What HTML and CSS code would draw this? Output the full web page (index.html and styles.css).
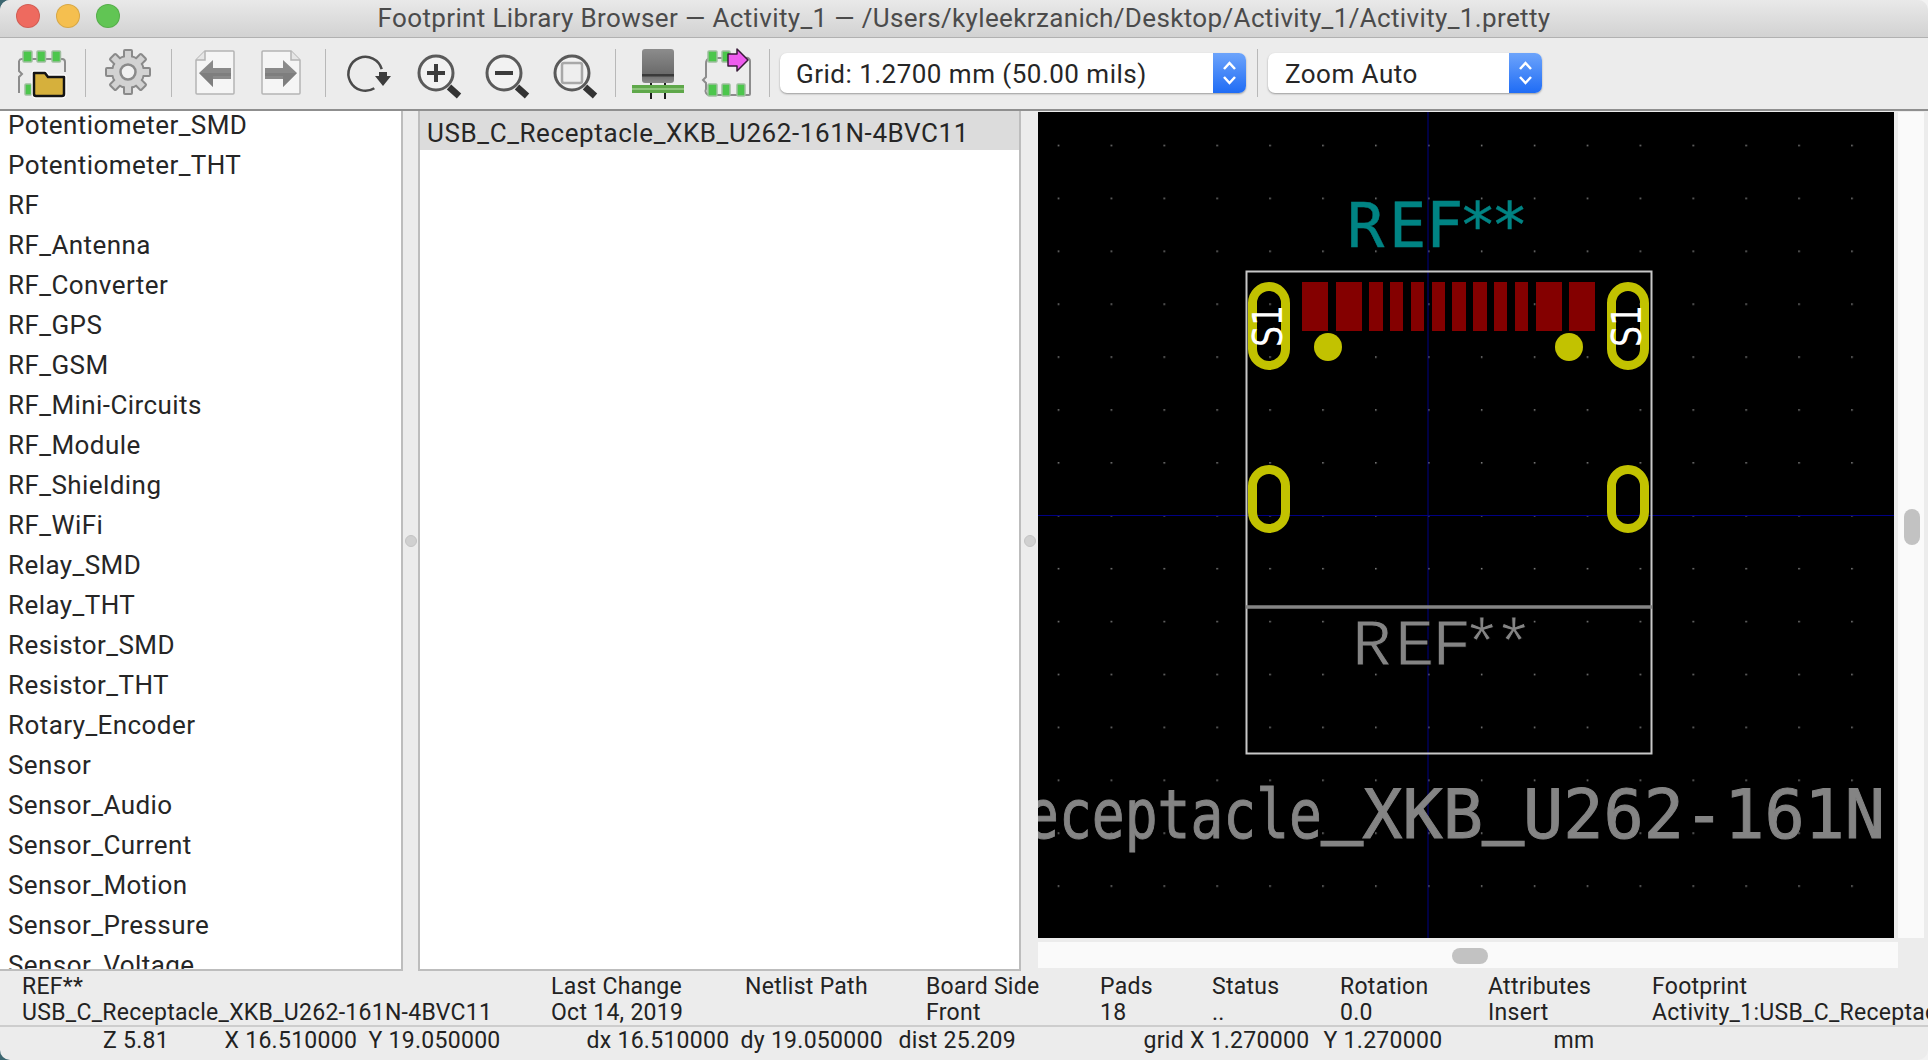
FILE: index.html
```html
<!DOCTYPE html>
<html lang="en">
<head>
<meta charset="utf-8">
<title>Footprint Library Browser</title>
<link rel="stylesheet" href="styles.css">
</head>
<body>
<div class="window">
  <header class="titlebar">
    <div class="lights"><span class="light red"></span><span class="light yellow"></span><span class="light green"></span></div>
    <div class="title">Footprint Library Browser — Activity_1 — /Users/kyleekrzanich/Desktop/Activity_1/Activity_1.pretty</div>
  </header>

  <div class="toolbar">
    <svg class="icon" viewBox="0 0 48 48">
      <path d="M1 12a3 3 0 0 1 3-2h40a3 3 0 0 1 3 3v10M1 12v10l3 3-3 3v16" fill="none" stroke="#8c8c8c" stroke-width="2"/>
      <g fill="#4cc64c" stroke="#9fbf9f" stroke-width="1.5"><rect x="5" y="2" width="9" height="11" rx="1"/><rect x="19" y="2" width="8.500" height="11" rx="1"/><rect x="34" y="2" width="8.500" height="11" rx="1"/><rect x="7" y="35" width="6.500" height="11" rx="1"/></g>
      <path d="M16 45V24h11l3 4h16v17a2 2 0 0 1-2 2H18a2 2 0 0 1-2-2z" fill="#d6b03c" stroke="#fff" stroke-width="5" stroke-linejoin="round"/>
      <path d="M16 45V24h11l3 4h16v17a2 2 0 0 1-2 2H18a2 2 0 0 1-2-2z" fill="#d6b03c" stroke="#141414" stroke-width="2.500" stroke-linejoin="round"/>
    </svg>
    <span class="sep"></span>
    <svg class="icon" viewBox="0 0 48 48">
      <circle cx="24" cy="23" r="16" fill="#d2d2d2" stroke="#8a8a8a" stroke-width="2"/>
      <g fill="#d2d2d2" stroke="#8a8a8a" stroke-width="2">
        <rect x="20" y="1" width="8" height="10" rx="1"/>
        <rect x="20" y="1" width="8" height="10" rx="1" transform="rotate(45 24 23)"/>
        <rect x="20" y="1" width="8" height="10" rx="1" transform="rotate(90 24 23)"/>
        <rect x="20" y="1" width="8" height="10" rx="1" transform="rotate(135 24 23)"/>
        <rect x="20" y="1" width="8" height="10" rx="1" transform="rotate(180 24 23)"/>
        <rect x="20" y="1" width="8" height="10" rx="1" transform="rotate(225 24 23)"/>
        <rect x="20" y="1" width="8" height="10" rx="1" transform="rotate(270 24 23)"/>
        <rect x="20" y="1" width="8" height="10" rx="1" transform="rotate(315 24 23)"/>
      </g>
      <circle cx="24" cy="23" r="15" fill="#d2d2d2"/>
      <circle cx="24" cy="23" r="7.500" fill="#f0f0f0" stroke="#8a8a8a" stroke-width="2.500"/>
    </svg>
    <span class="sep"></span>
    <div class="group">
      <svg class="icon" viewBox="0 0 48 48">
        <path d="M15 2h28a1 1 0 0 1 1 1v41a1 1 0 0 1-1 1H7a1 1 0 0 1-1-1V11z" fill="#f5f5f5" stroke="#b4b4b4" stroke-width="1.500"/>
        <path d="M6 11h9V2" fill="#e6e6e6" stroke="#b4b4b4" stroke-width="1.500"/>
        <path d="M9 24l14-13v8h18v11H23v8z" fill="#8a8a8a"/>
        <path d="M9 24h32v3H23v11z" fill="#6f6f6f" opacity=".45"/>
      </svg>
      <svg class="icon" viewBox="0 0 48 48">
        <path d="M33 2H5a1 1 0 0 0-1 1v41a1 1 0 0 0 1 1h36a1 1 0 0 0 1-1V11z" fill="#f5f5f5" stroke="#b4b4b4" stroke-width="1.500"/>
        <path d="M42 11h-9V2" fill="#e6e6e6" stroke="#b4b4b4" stroke-width="1.500"/>
        <path d="M39 24L25 11v8H7v11h18v8z" fill="#8a8a8a"/>
        <path d="M39 24H7v3h18v11z" fill="#6f6f6f" opacity=".45"/>
      </svg>
    </div>
    <span class="sep"></span>
    <div class="group">
      <svg class="icon" viewBox="0 0 48 48">
        <path d="M38 22A17 17 0 1 0 28 40" fill="none" stroke="#4a4a4a" stroke-width="2.500" transform="rotate(-8 24 23)"/>
        <path d="M35 23h8v4h4l-8 10-8-10h4z" fill="#3c3c3c"/>
      </svg>
      <svg class="icon" viewBox="0 0 48 48">
        <circle cx="24" cy="24" r="17" fill="#f2f2f2" stroke="#5a5a5a" stroke-width="3"/>
        <path d="M24 15v18M15 24h18" stroke="#3c3c3c" stroke-width="4"/>
        <path d="M37 38l10 9" stroke="#333" stroke-width="6.500"/>
      </svg>
      <svg class="icon" viewBox="0 0 48 48">
        <circle cx="24" cy="24" r="17" fill="#f2f2f2" stroke="#5a5a5a" stroke-width="3"/>
        <path d="M15 24h18" stroke="#3c3c3c" stroke-width="4"/>
        <path d="M37 38l10 9" stroke="#333" stroke-width="6.500"/>
      </svg>
      <svg class="icon" viewBox="0 0 48 48">
        <circle cx="24" cy="24" r="17" fill="#f2f2f2" stroke="#5a5a5a" stroke-width="3"/>
        <rect x="14" y="14" width="20" height="20" rx="2" fill="#eeeeee" stroke="#a8a8a8" stroke-width="2.500"/>
        <path d="M37 38l10 9" stroke="#333" stroke-width="6.500"/>
      </svg>
    </div>
    <span class="sep"></span>
    <div class="group">
      <svg class="icon" viewBox="0 0 48 48">
        <defs><linearGradient id="cap" x1="0" y1="0" x2="0" y2="1"><stop offset="0" stop-color="#8c8c8c"/><stop offset=".75" stop-color="#6a6a6a"/><stop offset="1" stop-color="#8a8a8a"/></linearGradient></defs>
        <path d="M17 32v18M31 32v18" stroke="#1e1e1e" stroke-width="2"/>
        <rect x="8" y="0" width="32" height="34" rx="3" fill="url(#cap)"/>
        <rect x="8" y="25" width="32" height="2.500" fill="#3a3a3a"/>
        <rect x="-2" y="36" width="52" height="8" fill="#5fa84a"/>
        <rect x="-2" y="39" width="52" height="2" fill="#8cc47a"/>
      </svg>
      <svg class="icon" viewBox="0 0 48 48">
        <path d="M4 15a6 6 0 0 1 4-6h36a3 3 0 0 1 4 3v33a1 1 0 0 1-1 1H8a4 4 0 0 1-4-6v-6l-3-3 3-3z" fill="none" stroke="#8c8c8c" stroke-width="2"/>
        <g fill="#4cc64c" stroke="#9fbf9f" stroke-width="1.500"><rect x="6" y="2" width="9" height="11" rx="1"/><rect x="20" y="2" width="8" height="11" rx="1"/><rect x="6" y="35" width="9" height="12" rx="1"/><rect x="20" y="35" width="8" height="12" rx="1"/><rect x="35" y="35" width="8" height="12" rx="1"/></g>
        <path d="M26 5h9V0l11 11-11 11v-5h-9z" fill="#ee5cee" stroke="#3a1a3a" stroke-width="1.500" stroke-linejoin="round"/>
      </svg>
    </div>
    <span class="sep"></span>
    <div class="combo combo-grid">
      <span class="combo-text">Grid: 1.2700 mm (50.00 mils)</span>
      <span class="stepper"><svg viewBox="0 0 33 40"><path d="M11 16l5.500-6 5.500 6M11 24l5.500 6 5.500-6" fill="none" stroke="#fff" stroke-width="2.500"/></svg></span>
    </div>
    <span class="sep"></span>
    <div class="combo combo-zoom">
      <span class="combo-text">Zoom Auto</span>
      <span class="stepper"><svg viewBox="0 0 33 40"><path d="M11 16l5.500-6 5.500 6M11 24l5.500 6 5.500-6" fill="none" stroke="#fff" stroke-width="2.500"/></svg></span>
    </div>
  </div>

  <main class="main">
    <div class="list list-libs">
      <ul class="rows">
        <li>Potentiometer_SMD</li><li>Potentiometer_THT</li><li>RF</li><li>RF_Antenna</li><li>RF_Converter</li><li>RF_GPS</li><li>RF_GSM</li><li>RF_Mini-Circuits</li><li>RF_Module</li><li>RF_Shielding</li><li>RF_WiFi</li><li>Relay_SMD</li><li>Relay_THT</li><li>Resistor_SMD</li><li>Resistor_THT</li><li>Rotary_Encoder</li><li>Sensor</li><li>Sensor_Audio</li><li>Sensor_Current</li><li>Sensor_Motion</li><li>Sensor_Pressure</li><li>Sensor_Voltage</li>
      </ul>
    </div>
    <div class="sash"><span class="sash-dot"></span></div>
    <div class="list list-fps">
      <div class="selected">USB_C_Receptacle_XKB_U262-161N-4BVC11</div>
    </div>
    <div class="sash"><span class="sash-dot"></span></div>
    <div class="canvas-area">
      <svg class="canvas" viewBox="1038 112 856 826">
        <defs>
          <pattern id="grid" x="1428" y="515" width="52.9" height="52.9" patternUnits="userSpaceOnUse"><rect x="0" y="0" width="1.500" height="1.500" fill="#8a8a8a"/></pattern>
          <clipPath id="clip"><rect x="1038" y="112" width="856" height="826"/></clipPath>
        </defs>
        <rect x="1038" y="112" width="856" height="826" fill="#000"/>
        <rect x="1038" y="112" width="856" height="826" fill="url(#grid)"/>
        <path d="M1428 112v826M1038 515.500h856" stroke="#000084" stroke-width="1"/>
        <rect x="1246.500" y="271.500" width="405" height="482" fill="none" stroke="#c8c8c8" stroke-width="2"/>
        <path d="M1246 607h406" stroke="#848484" stroke-width="3.500"/>
        <g fill="#840000">
          <rect x="1302" y="282" width="26" height="49"/><rect x="1336" y="282" width="26" height="49"/><rect x="1369" y="282" width="14" height="49"/><rect x="1390" y="282" width="13" height="49"/><rect x="1411" y="282" width="13" height="49"/><rect x="1432" y="282" width="13" height="49"/><rect x="1452" y="282" width="14" height="49"/><rect x="1473" y="282" width="14" height="49"/><rect x="1494" y="282" width="13" height="49"/><rect x="1515" y="282" width="13" height="49"/><rect x="1536" y="282" width="26" height="49"/><rect x="1569" y="282" width="26" height="49"/>
        </g>
        <g fill="#c2c200"><circle cx="1328" cy="347" r="14"/><circle cx="1569" cy="347" r="14"/></g>
        <g fill="none" stroke="#c2c200" stroke-width="9">
          <rect x="1252.500" y="286.500" width="33" height="79" rx="16.500"/>
          <rect x="1611.500" y="286.500" width="33" height="79" rx="16.500"/>
          <rect x="1252.500" y="469.500" width="33" height="59" rx="16.500"/>
          <rect x="1611.500" y="469.500" width="33" height="59" rx="16.500"/>
        </g>
        <text class="pad-name" transform="translate(1282 347) rotate(-90)" textLength="42" lengthAdjust="spacingAndGlyphs">S1</text>
        <text class="pad-name" transform="translate(1641 347) rotate(-90)" textLength="42" lengthAdjust="spacingAndGlyphs">S1</text>
        <text class="ref-top" x="1347 1389 1426 1459 1491" y="247">REF**</text>
        <text class="ref-fab" x="1352 1395 1432 1462 1494" y="665">REF**</text>
        <g clip-path="url(#clip)">
          <text class="value" x="1026" y="838" textLength="296" lengthAdjust="spacingAndGlyphs">eceptacle</text>
          <text class="value" x="1322" y="838"><tspan class="under" dy="-9">_</tspan><tspan dy="9">XKB</tspan><tspan class="under" dy="-9">_</tspan><tspan dy="9">U262-161N</tspan></text>
        </g>
      </svg>
      <div class="gutter"></div>
      <div class="vscroll"><span class="vthumb"></span></div>
      <div class="hscroll"><span class="hthumb"></span></div>
    </div>
  </main>

  <section class="msgpanel">
    <div class="col c1"><div>REF**</div><div>USB_C_Receptacle_XKB_U262-161N-4BVC11</div></div>
    <div class="col c2"><div>Last Change</div><div>Oct 14, 2019</div></div>
    <div class="col c3"><div>Netlist Path</div><div></div></div>
    <div class="col c4"><div>Board Side</div><div>Front</div></div>
    <div class="col c5"><div>Pads</div><div>18</div></div>
    <div class="col c6"><div>Status</div><div>..</div></div>
    <div class="col c7"><div>Rotation</div><div>0.0</div></div>
    <div class="col c8"><div>Attributes</div><div>Insert</div></div>
    <div class="col c9"><div>Footprint</div><div>Activity_1:USB_C_Receptacle_XKB_U262-161N-4BVC11</div></div>
  </section>

  <footer class="statusbar">
    <span>Z 5.81</span><span>X 16.510000</span><span>Y 19.050000</span><span>dx 16.510000</span><span>dy 19.050000</span><span>dist 25.209</span><span>grid X 1.270000</span><span>Y 1.270000</span><span>mm</span>
  </footer>
</div>
</body>
</html>
```
FILE: styles.css
```css
* { box-sizing: border-box; }
html, body { margin: 0; height: 100%; }
body {
  width: 1928px;
  height: 1060px;
  overflow: hidden;
  background: linear-gradient(to right, #3c6670 50%, #f2f2f2 50%);
  font-family: Roboto, "Liberation Sans", sans-serif;
  color: #222;
}
.window {
  width: 1928px;
  height: 1060px;
  background: #ececec;
  border-radius: 10px;
  overflow: hidden;
  display: flex;
  flex-direction: column;
}
.titlebar {
  height: 38px;
  flex: none;
  display: flex;
  align-items: center;
  position: relative;
  background: linear-gradient(#e9e9e9, #d2d2d2);
  border-bottom: 1px solid #b1b1b1;
}
.lights {
  position: absolute;
  left: 16px;
  top: 4px;
  display: flex;
  gap: 16px;
}
.light { width: 24px; height: 24px; border-radius: 50%; border: 1px solid rgba(0, 0, 0, .12); }
.red { background: #ee6a5f; }
.yellow { background: #f5bf4f; }
.green { background: #61c554; }
.title {
  flex: 1;
  text-align: center;
  font-size: 26px;
  letter-spacing: .36px;
  line-height: 34px;
  margin-bottom: 2px;
  color: #4b4b4b;
  white-space: nowrap;
}
.toolbar {
  height: 73px;
  flex: none;
  display: flex;
  align-items: center;
  padding: 1px 0 2px 18px;
  background: #ececec;
  border-bottom: 2px solid #8f8f8f;
}
.icon {
  width: 48px;
  height: 48px;
  flex: none;
  overflow: visible;
  filter: blur(.6px);
}
.sep {
  width: 1px;
  height: 48px;
  flex: none;
  margin: 0 18px 0 19px;
  background: #b8b8b8;
}
.group { display: flex; gap: 20px; flex: none; }
.combo {
  height: 40px;
  flex: none;
  display: flex;
  align-items: center;
  justify-content: space-between;
  margin: 0 -8px;
  padding-left: 16px;
  background: #fff;
  border-radius: 7px;
  box-shadow: 0 1px 2px rgba(0, 0, 0, .35);
  font-size: 26px;
  letter-spacing: .48px;
  color: #262626;
  overflow: hidden;
}
.combo-text { padding-top: 2px; }
.combo-grid { width: 466px; }
.combo-zoom { width: 274px; padding-left: 17px; }
.stepper {
  width: 33px;
  height: 40px;
  flex: none;
  background: linear-gradient(#6da4fb, #1f6cf5);
}
.stepper svg { display: block; width: 33px; height: 40px; }
.main {
  height: 861px;
  flex: none;
  display: flex;
}
.list {
  background: #fff;
  height: 860px;
  overflow: hidden;
  flex: none;
  font-size: 26px;
  letter-spacing: .43px;
  color: #262626;
  border-bottom: 2px solid #bdbdbd;
}
.list-libs { width: 403px; border-right: 2px solid #bdbdbd; }
.list-fps { width: 603px; border-left: 2px solid #bdbdbd; border-right: 2px solid #bdbdbd; letter-spacing: .6px; }
.rows {
  list-style: none;
  margin: -6px 0 0;
  padding: 0 0 0 8px;
}
.rows li { height: 40px; line-height: 40px; white-space: nowrap; }
.selected {
  height: 39px;
  line-height: 44px;
  padding-left: 7px;
  background: #dcdcdc;
  white-space: nowrap;
}
.sash {
  flex: none;
  width: 15px;
  display: flex;
  align-items: center;
  justify-content: center;
}
.sash:nth-of-type(4) { width: 17px; }
.sash-dot {
  width: 12px;
  height: 12px;
  margin-bottom: 2px;
  border-radius: 50%;
  background: #d0d0d0;
  border: 1px solid #c4c4c4;
}
.canvas-area {
  flex: 1;
  display: grid;
  grid-template-columns: 856px 4px 26px;
  grid-template-rows: 826px 4px 26px;
  padding-top: 1px;
}
.canvas { grid-column: 1; grid-row: 1; width: 856px; height: 826px; display: block; }
.gutter { grid-column: 2; grid-row: 1; }
.vscroll { grid-column: 3; grid-row: 1; background: #fafafa; padding: 397px 5px 0 6px; }
.vthumb { display: block; width: 16px; height: 36px; background: #c2c2c2; border-radius: 8px; }
.hscroll { grid-column: 1 / span 2; grid-row: 3; background: #fafafa; padding: 6px 0 0 414px; }
.hthumb { display: block; width: 36px; height: 16px; background: #c2c2c2; border-radius: 8px; }
.pad-name {
  font-family: "DejaVu Sans", sans-serif;
  font-size: 40px;
  fill: #fff;
}
.ref-top {
  font-family: "DejaVu Sans Mono", monospace;
  font-size: 62px;
  fill: #008484;
  stroke: #008484;
  stroke-width: .4px;
}
.ref-fab {
  font-family: "Liberation Mono", monospace;
  font-size: 66px;
  fill: #848484;
  stroke: #000;
  stroke-width: 1px;
}
.value {
  font-family: "DejaVu Sans Mono", monospace;
  font-size: 66.8px;
  fill: #848484;
  stroke: #848484;
  stroke-width: 1px;
}
.under { stroke-width: 3px; }
.msgpanel {
  height: 55px;
  flex: none;
  display: grid;
  grid-template-columns: 529px 194px 181px 174px 112px 128px 148px 164px 1fr;
  padding: 2px 0 0 22px;
  font-size: 23px;
  letter-spacing: .28px;
  line-height: 26px;
  color: #222;
  border-bottom: 2px solid #cdcdcd;
  overflow: hidden;
}
.col { white-space: nowrap; min-width: 0; }
.col div { height: 26px; }
.statusbar {
  flex: 1;
  display: grid;
  grid-template-columns: 121.5px 144px 218px 154px 158px 245px 180px 230px 1fr;
  padding-left: 103px;
  font-size: 23px;
  letter-spacing: .28px;
  line-height: 28px;
  color: #222;
  white-space: nowrap;
}
```
